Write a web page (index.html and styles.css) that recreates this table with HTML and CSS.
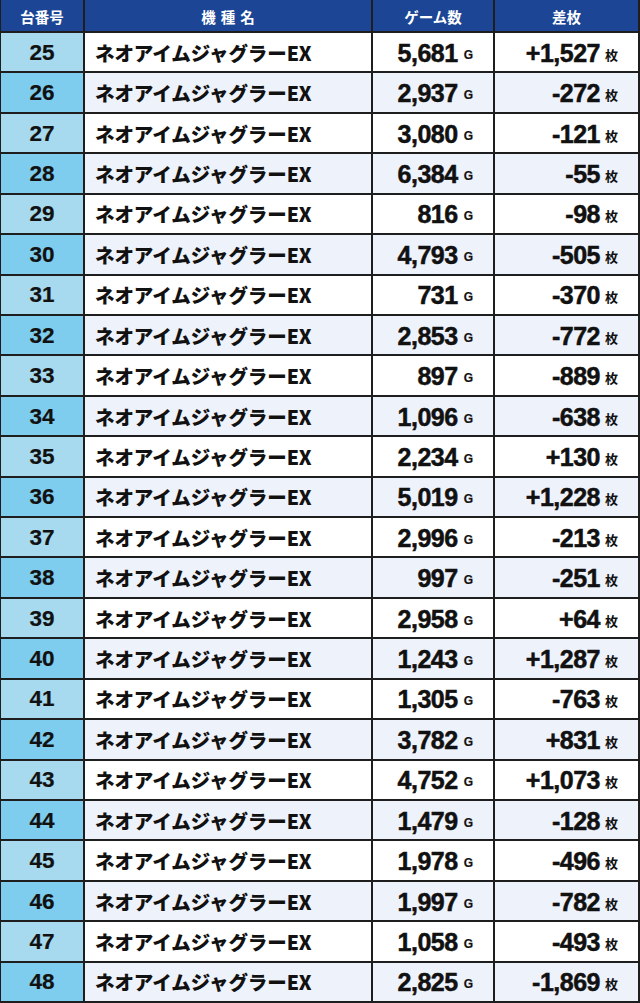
FILE: index.html
```html
<!DOCTYPE html>
<html lang="ja">
<head>
<meta charset="utf-8">
<title>データ</title>
<link rel="stylesheet" href="styles.css">
</head>
<body>
<div class="table">
  <div class="row head">
    <div class="cell">台番号</div>
    <div class="cell spaced">機種名</div>
    <div class="cell">ゲーム数</div>
    <div class="cell">差枚</div>
  </div>
  <div class="row"><div class="cell no">25</div><div class="cell name">ネオアイムジャグラーEX</div><div class="cell num"><span class="v">5,681<span class="g">G</span></span></div><div class="cell num"><span class="v">+1,527<span class="m">枚</span></span></div></div>
  <div class="row alt"><div class="cell no">26</div><div class="cell name">ネオアイムジャグラーEX</div><div class="cell num"><span class="v">2,937<span class="g">G</span></span></div><div class="cell num"><span class="v">-272<span class="m">枚</span></span></div></div>
  <div class="row"><div class="cell no">27</div><div class="cell name">ネオアイムジャグラーEX</div><div class="cell num"><span class="v">3,080<span class="g">G</span></span></div><div class="cell num"><span class="v">-121<span class="m">枚</span></span></div></div>
  <div class="row alt"><div class="cell no">28</div><div class="cell name">ネオアイムジャグラーEX</div><div class="cell num"><span class="v">6,384<span class="g">G</span></span></div><div class="cell num"><span class="v">-55<span class="m">枚</span></span></div></div>
  <div class="row"><div class="cell no">29</div><div class="cell name">ネオアイムジャグラーEX</div><div class="cell num"><span class="v">816<span class="g">G</span></span></div><div class="cell num"><span class="v">-98<span class="m">枚</span></span></div></div>
  <div class="row alt"><div class="cell no">30</div><div class="cell name">ネオアイムジャグラーEX</div><div class="cell num"><span class="v">4,793<span class="g">G</span></span></div><div class="cell num"><span class="v">-505<span class="m">枚</span></span></div></div>
  <div class="row"><div class="cell no">31</div><div class="cell name">ネオアイムジャグラーEX</div><div class="cell num"><span class="v">731<span class="g">G</span></span></div><div class="cell num"><span class="v">-370<span class="m">枚</span></span></div></div>
  <div class="row alt"><div class="cell no">32</div><div class="cell name">ネオアイムジャグラーEX</div><div class="cell num"><span class="v">2,853<span class="g">G</span></span></div><div class="cell num"><span class="v">-772<span class="m">枚</span></span></div></div>
  <div class="row"><div class="cell no">33</div><div class="cell name">ネオアイムジャグラーEX</div><div class="cell num"><span class="v">897<span class="g">G</span></span></div><div class="cell num"><span class="v">-889<span class="m">枚</span></span></div></div>
  <div class="row alt"><div class="cell no">34</div><div class="cell name">ネオアイムジャグラーEX</div><div class="cell num"><span class="v">1,096<span class="g">G</span></span></div><div class="cell num"><span class="v">-638<span class="m">枚</span></span></div></div>
  <div class="row"><div class="cell no">35</div><div class="cell name">ネオアイムジャグラーEX</div><div class="cell num"><span class="v">2,234<span class="g">G</span></span></div><div class="cell num"><span class="v">+130<span class="m">枚</span></span></div></div>
  <div class="row alt"><div class="cell no">36</div><div class="cell name">ネオアイムジャグラーEX</div><div class="cell num"><span class="v">5,019<span class="g">G</span></span></div><div class="cell num"><span class="v">+1,228<span class="m">枚</span></span></div></div>
  <div class="row"><div class="cell no">37</div><div class="cell name">ネオアイムジャグラーEX</div><div class="cell num"><span class="v">2,996<span class="g">G</span></span></div><div class="cell num"><span class="v">-213<span class="m">枚</span></span></div></div>
  <div class="row alt"><div class="cell no">38</div><div class="cell name">ネオアイムジャグラーEX</div><div class="cell num"><span class="v">997<span class="g">G</span></span></div><div class="cell num"><span class="v">-251<span class="m">枚</span></span></div></div>
  <div class="row"><div class="cell no">39</div><div class="cell name">ネオアイムジャグラーEX</div><div class="cell num"><span class="v">2,958<span class="g">G</span></span></div><div class="cell num"><span class="v">+64<span class="m">枚</span></span></div></div>
  <div class="row alt"><div class="cell no">40</div><div class="cell name">ネオアイムジャグラーEX</div><div class="cell num"><span class="v">1,243<span class="g">G</span></span></div><div class="cell num"><span class="v">+1,287<span class="m">枚</span></span></div></div>
  <div class="row"><div class="cell no">41</div><div class="cell name">ネオアイムジャグラーEX</div><div class="cell num"><span class="v">1,305<span class="g">G</span></span></div><div class="cell num"><span class="v">-763<span class="m">枚</span></span></div></div>
  <div class="row alt"><div class="cell no">42</div><div class="cell name">ネオアイムジャグラーEX</div><div class="cell num"><span class="v">3,782<span class="g">G</span></span></div><div class="cell num"><span class="v">+831<span class="m">枚</span></span></div></div>
  <div class="row"><div class="cell no">43</div><div class="cell name">ネオアイムジャグラーEX</div><div class="cell num"><span class="v">4,752<span class="g">G</span></span></div><div class="cell num"><span class="v">+1,073<span class="m">枚</span></span></div></div>
  <div class="row alt"><div class="cell no">44</div><div class="cell name">ネオアイムジャグラーEX</div><div class="cell num"><span class="v">1,479<span class="g">G</span></span></div><div class="cell num"><span class="v">-128<span class="m">枚</span></span></div></div>
  <div class="row"><div class="cell no">45</div><div class="cell name">ネオアイムジャグラーEX</div><div class="cell num"><span class="v">1,978<span class="g">G</span></span></div><div class="cell num"><span class="v">-496<span class="m">枚</span></span></div></div>
  <div class="row alt"><div class="cell no">46</div><div class="cell name">ネオアイムジャグラーEX</div><div class="cell num"><span class="v">1,997<span class="g">G</span></span></div><div class="cell num"><span class="v">-782<span class="m">枚</span></span></div></div>
  <div class="row"><div class="cell no">47</div><div class="cell name">ネオアイムジャグラーEX</div><div class="cell num"><span class="v">1,058<span class="g">G</span></span></div><div class="cell num"><span class="v">-493<span class="m">枚</span></span></div></div>
  <div class="row alt"><div class="cell no">48</div><div class="cell name">ネオアイムジャグラーEX</div><div class="cell num"><span class="v">2,825<span class="g">G</span></span></div><div class="cell num"><span class="v">-1,869<span class="m">枚</span></span></div></div>
</div>
</body>
</html>
```
FILE: styles.css
```css
html, body {
  margin: 0;
  padding: 0;
  background: #ffffff;
}
.table {
  width: 640px;
  height: 1003px;
  box-sizing: border-box;
  display: flex;
  flex-direction: column;
  gap: 2px;
  padding: 0 2px 2px 1px;
  background: #1e1e1e;
}
.row {
  flex: 1 1 0;
  min-height: 0;
  display: grid;
  grid-template-columns: 82px 286px 120px 1fr;
  column-gap: 2px;
}
.row.head {
  flex: 0 0 31px;
}
.cell {
  display: flex;
  align-items: center;
  background: #ffffff;
  color: #111111;
  overflow: hidden;
  white-space: nowrap;
}
.head .cell {
  background: #1c4596;
  color: #ffffff;
  justify-content: center;
  font-family: "Noto Sans CJK JP", sans-serif;
  font-weight: 700;
  font-size: 14.5px;
  padding-top: 1px;
}
.head .spaced {
  letter-spacing: 5px;
  text-indent: 5px;
}
.alt .cell {
  background: #eef2fb;
}
.cell.no {
  background: #a7daee;
  justify-content: center;
  font-family: "Liberation Sans", Arial, sans-serif;
  font-weight: 700;
  font-size: 22.5px;
  padding-top: 1px;
  -webkit-text-stroke: 0.2px #111111;
}
.alt .cell.no {
  background: #7ecdee;
}
.cell.name {
  padding-left: 10px;
  font-family: "Noto Sans CJK JP", sans-serif;
  font-weight: 900;
  font-size: 19.5px;
  letter-spacing: -0.1px;
}
.cell.num {
  justify-content: flex-end;
  padding-right: 20px;
  font-family: "Liberation Sans", Arial, sans-serif;
  font-weight: 700;
  font-size: 25px;
  letter-spacing: -0.5px;
  -webkit-text-stroke: 0.5px #111111;
}
.v {
  display: block;
  line-height: 1;
  padding-top: 2px;
}
.g {
  font-size: 12px;
  margin-left: 6px;
  letter-spacing: 0;
  position: relative;
  top: -3px;
  -webkit-text-stroke: 0.2px #111111;
}
.m {
  font-family: "Noto Sans CJK JP", sans-serif;
  font-weight: 700;
  font-size: 13px;
  margin-left: 5px;
  letter-spacing: 0;
  position: relative;
  top: -2px;
  -webkit-text-stroke: 0;
}
```
